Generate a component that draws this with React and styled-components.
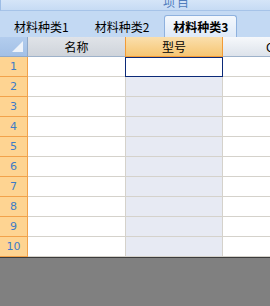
import { Fragment } from "react";
import styled, { createGlobalStyle } from "styled-components";

const GlobalStyle = createGlobalStyle`
  html, body {
    margin: 0;
    padding: 0;
    background: #808080;
  }
  body {
    font-family: "Noto Sans CJK SC", "Liberation Sans", sans-serif;
    font-size: 12px;
  }
`;

const Page = styled.div`
  width: 270px;
  height: 306px;
  overflow: hidden;
  display: flex;
  flex-direction: column;
  background: #808080;
`;

const TitleBar = styled.div`
  height: 10px;
  flex: none;
  overflow: hidden;
  background: linear-gradient(to bottom, #d5e5f8, #c6dbf4);
  border-left: 1px solid #9dbde6;
  border-bottom: 1px solid #a6c3e8;
  padding-left: 162px;
`;

const TitleText = styled.div`
  font-size: 12px;
  line-height: 12px;
  margin-top: -4px;
  color: #4f7dbd;
  letter-spacing: 2px;
`;

const TabStrip = styled.div`
  height: 26px;
  flex: none;
  display: flex;
  align-items: flex-end;
  background: #c3d9f3;
  padding-left: 1px;
`;

const Tab = styled.div`
  height: 22px;
  line-height: 21px;
  padding: 0 ${(p) => (p.active ? "8px" : "12px")};
  margin-left: ${(p) => (p.active ? "2px" : "0")};
  color: #000;
  font-weight: ${(p) => (p.active ? 700 : 400)};
  white-space: nowrap;
  box-sizing: border-box;
  border: 1px solid ${(p) => (p.active ? "#8eb1de" : "transparent")};
  border-bottom: none;
  border-radius: 3px 3px 0 0;
  background: ${(p) =>
    p.active ? "linear-gradient(to bottom, #f4f8fd, #dfeaf8)" : "transparent"};
`;

const Grid = styled.div`
  display: grid;
  grid-template-columns: 28px 98px 97px 98px;
  grid-auto-rows: 20px;
  background: #fff;
  flex: none;
  border-bottom: 1px solid #3c3c3c;
`;

const Corner = styled.div`
  position: relative;
  box-sizing: border-box;
  background: linear-gradient(to bottom, #b3cdee, #a3c0e6);
  border-right: 1px solid #8fa8c8;
  border-bottom: 1px solid #8fa8c8;
`;

const CornerMark = styled.div`
  position: absolute;
  right: 4px;
  bottom: 4px;
  width: 0;
  height: 0;
  border-left: 11px solid transparent;
  border-bottom: 11px solid #eef3fa;
`;

const ColHeader = styled.div`
  box-sizing: border-box;
  display: flex;
  align-items: center;
  justify-content: ${(p) => (p.pad ? "flex-start" : "center")};
  padding-left: ${(p) => p.pad || 0}px;
  color: #000;
  white-space: nowrap;
  overflow: hidden;
  border-bottom: 1px solid ${(p) => (p.selected ? "#f29b36" : "#9eb2ca")};
  border-right: 1px solid ${(p) => (p.selected ? "#f29b36" : "#c0c8d4")};
  border-left: ${(p) => (p.selected ? "1px solid #f29b36" : "none")};
  margin-left: ${(p) => (p.selected ? "-1px" : "0")};
  background: ${(p) =>
    p.selected
      ? "linear-gradient(to bottom, #fadfad, #f6c673)"
      : p.light
      ? "linear-gradient(to bottom, #f6f8fb, #dde3eb)"
      : "linear-gradient(to bottom, #e0e3e8, #cfd4db)"};
`;

const RowHeader = styled.div`
  box-sizing: border-box;
  display: flex;
  align-items: center;
  justify-content: center;
  font-family: "DejaVu Sans", sans-serif;
  font-size: 11px;
  color: #3e7cc6;
  background: #fed492;
  border-right: 1px solid #f2a24a;
  border-bottom: 1px solid #f2a24a;
`;

const Cell = styled.div`
  box-sizing: border-box;
  background: ${(p) => (p.shaded ? "#e7eaf3" : "#fff")};
  border-right: 1px solid #d5d2cb;
  border-bottom: 1px solid #d5d2cb;
  ${(p) =>
    p.current &&
    "background: #fff; border: 1px solid #0c2a78; margin-left: -1px;"}
`;

const rows = [1, 2, 3, 4, 5, 6, 7, 8, 9, 10];

export default function App() {
  return (
    <Page>
      <GlobalStyle />
      <TitleBar>
        <TitleText>项目</TitleText>
      </TitleBar>
      <TabStrip>
        <Tab>材料种类1</Tab>
        <Tab>材料种类2</Tab>
        <Tab active>材料种类3</Tab>
      </TabStrip>
      <Grid>
        <Corner>
          <CornerMark />
        </Corner>
        <ColHeader>名称</ColHeader>
        <ColHeader selected>型号</ColHeader>
        <ColHeader light pad={43}>C</ColHeader>
        {rows.map((r) => (
          <Fragment key={r}>
            <RowHeader>{r}</RowHeader>
            <Cell />
            <Cell shaded current={r === 1} />
            <Cell />
          </Fragment>
        ))}
      </Grid>
    </Page>
  );
}
